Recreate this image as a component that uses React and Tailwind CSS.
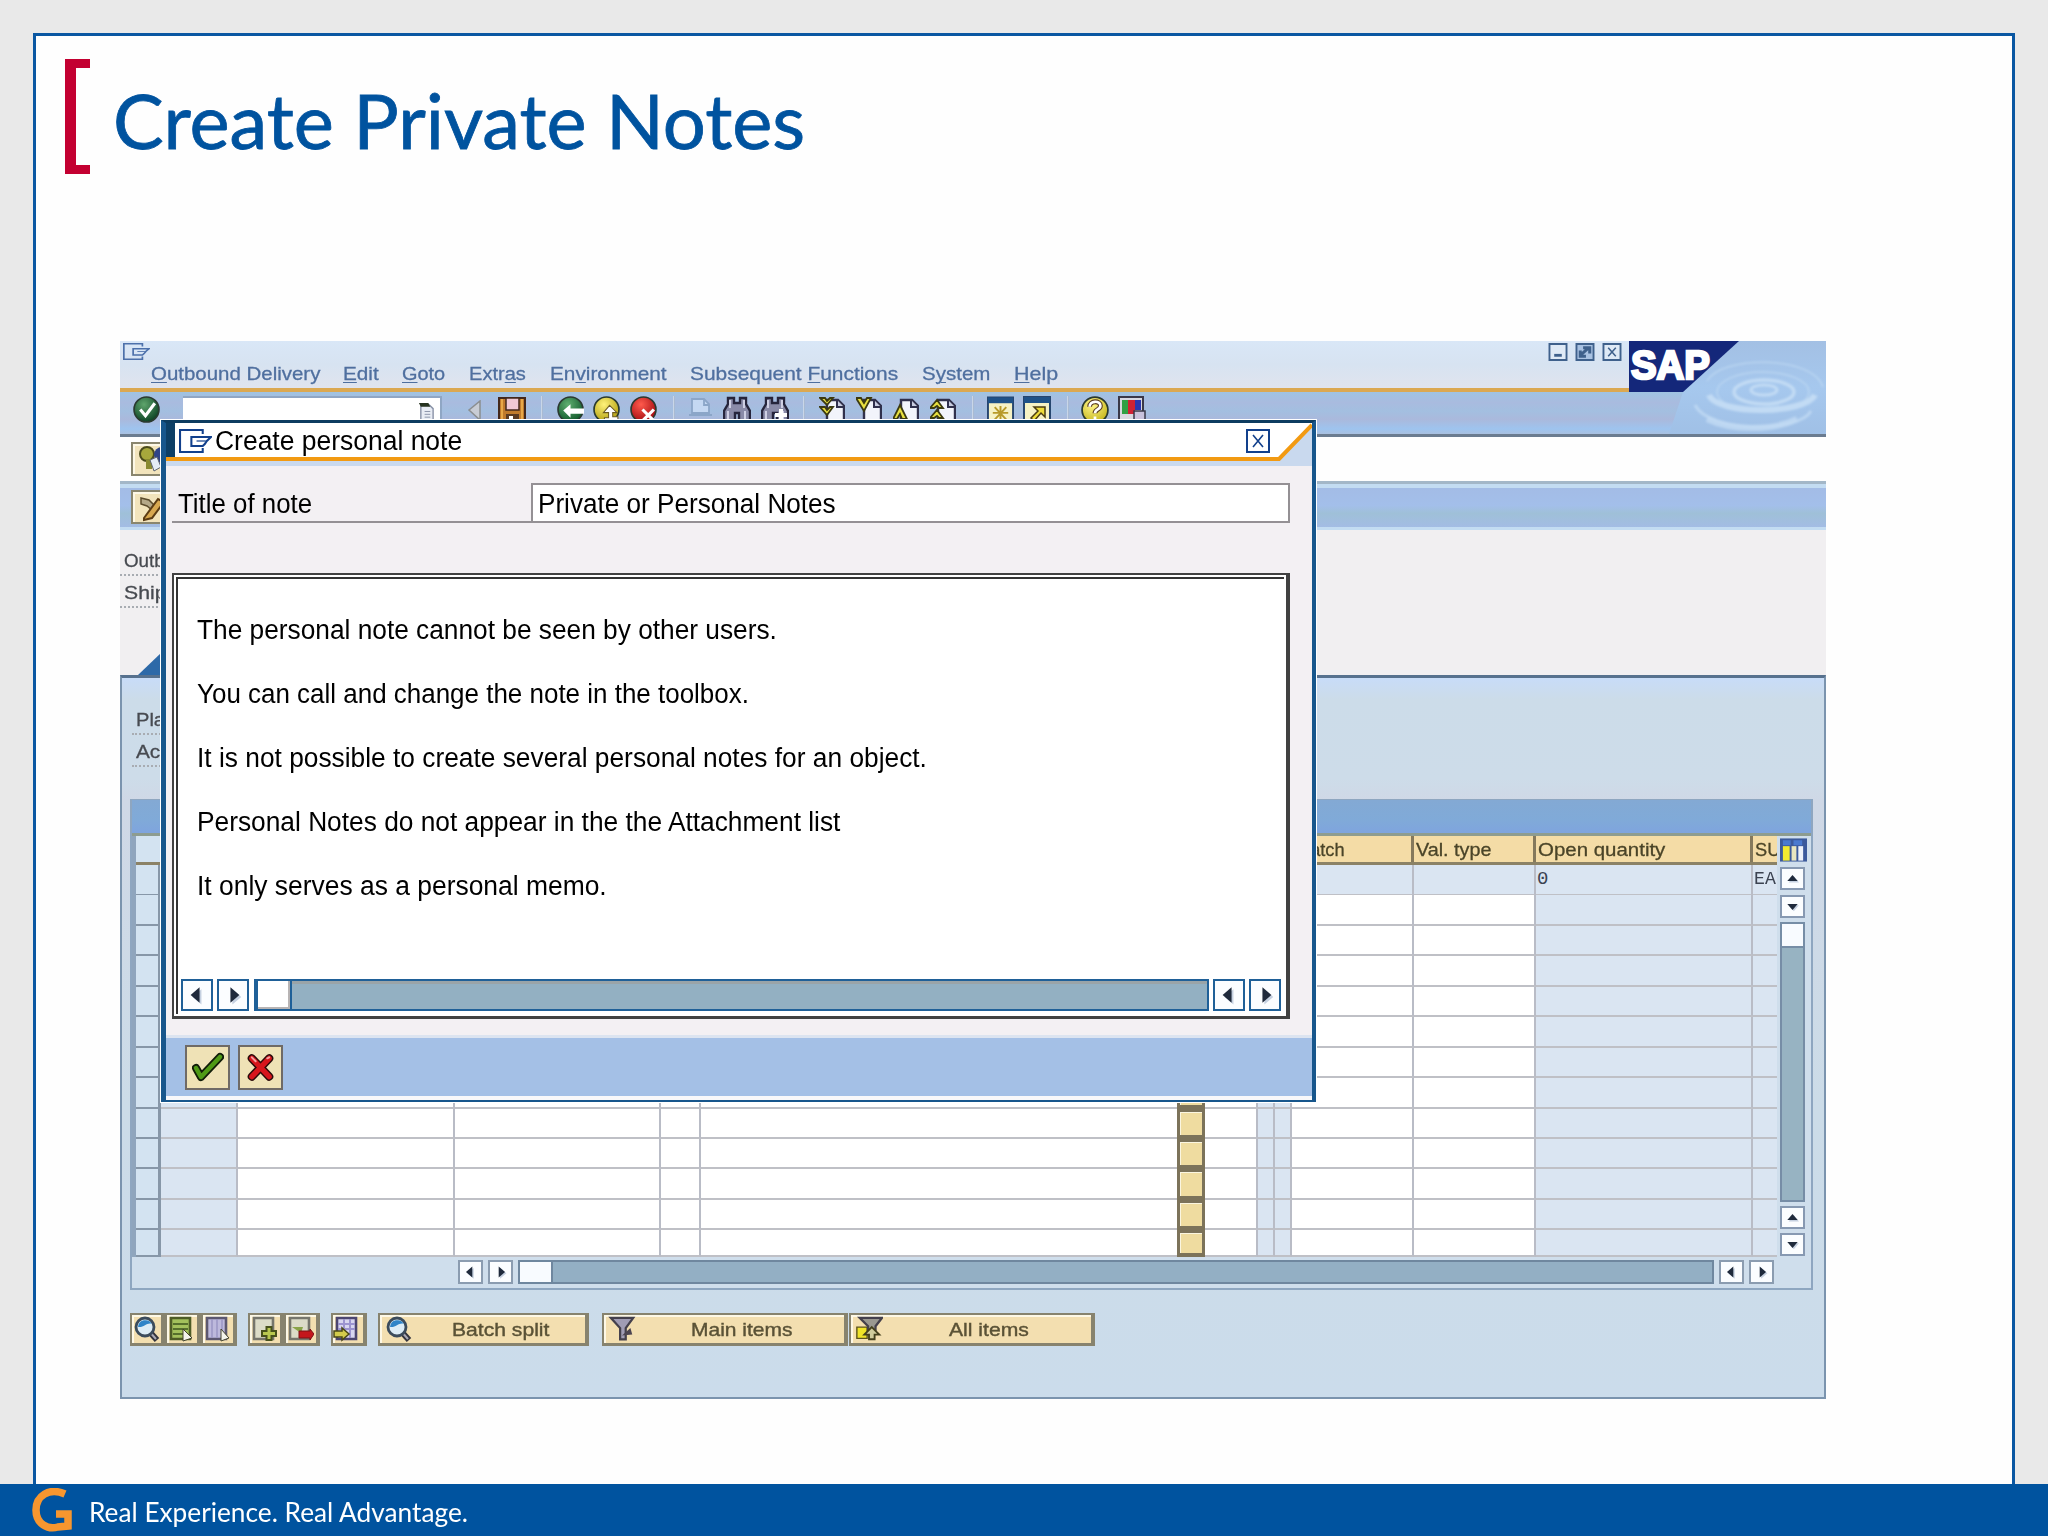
import React, { useLayoutEffect, useRef, useState } from "react";

/* Text on one line, condensed or widened to a set width. */
function Fit({ w, className = "", children }) {
  const ref = useRef(null);
  const [scale, setScale] = useState(1);
  useLayoutEffect(() => {
    const n = ref.current.offsetWidth;
    if (n) setScale(w / n);
  }, [w]);
  return (
    <span className={"block " + className} style={{ width: w }}>
      <span
        ref={ref}
        className="inline-block whitespace-pre origin-left"
        style={{ transform: `scaleX(${scale})` }}
      >
        {children}
      </span>
    </span>
  );
}

const U = ({ children }) => (
  <span className="underline decoration-1 underline-offset-2">{children}</span>
);

const DoorIcon = ({ className }) => (
  <svg viewBox="0 0 32 24" className={className} fill="none" stroke="#12408c" strokeWidth="2" preserveAspectRatio="none">
    <path d="M23 5V1H1v22h22v-4" />
    <path d="M12 8h19l-2 2-2 2-2 3-2 2H12z" />
    <path d="M17 12h9" strokeWidth="1.2" />
  </svg>
);

function Arrow({ dir, className = "" }) {
  const d = {
    left: "M13 5v12L6 11z",
    right: "M9 5v12l7-6z",
    up: "M11 7l6 7H5z",
    down: "M11 15l6-7H5z",
  }[dir];
  return (
    <span className={"block shrink-0 bg-[#fbfdff] border-2 " + className}>
      <svg viewBox="0 0 22 22" className="block w-full h-full">
        <path d={d} transform="translate(1.5 1.5)" fill="#c5d0e0" />
        <path d={d} fill="#1f2a3c" />
      </svg>
    </span>
  );
}

/* ---------- toolbar icons ---------- */
const Ball = ({ id, c1, c2, children, className }) => (
  <svg viewBox="0 0 26 26" className={className}>
    <defs>
      <radialGradient id={id} cx="0.4" cy="0.3" r="0.7">
        <stop offset="0" stopColor={c1} />
        <stop offset="1" stopColor={c2} />
      </radialGradient>
    </defs>
    <circle cx="13" cy="13" r="12" fill={`url(#${id})`} stroke="#2a3a30" strokeWidth="1.6" />
    {children}
  </svg>
);

const Sep = ({ className }) => <span className={"w-[2px] h-[26px] bg-[#c9d6e8] border-r border-[#a9bad2] " + className} />;

const Save = () => (
  <svg viewBox="0 0 28 26" className="w-[28px] h-[26px] ml-[16px]">
    <path d="M1 2h26v24H1z" fill="#c07a2c" stroke="#43281c" strokeWidth="2" />
    <path d="M8 2h13v12H8z" fill="#f0c8d4" stroke="#43281c" strokeWidth="1.5" />
    <path d="M4 3v22M24 3v22" stroke="#e8a848" strokeWidth="2" />
    <path d="M8 18h13v8H8z" fill="#5b3a22" />
    <path d="M11 20h4v6h-4z" fill="#fff" />
  </svg>
);

const Printer = () => (
  <svg viewBox="0 0 25 26" className="w-[25px] h-[26px] ml-[13px]" fill="none" stroke="#8ba6c8" strokeWidth="1.8">
    <path d="M4 17V3h12l5 5v9z" fill="#c4d8f2" />
    <path d="M16 3v6h5M1 19h23M2 24h21" />
  </svg>
);

const Find = ({ plus, className }) => (
  <svg viewBox="0 0 28 26" className={className}>
    <path d="M5 2h6v5h6V2h6v6l4 7v11H16v-9h-4v9H1V15l4-7z" fill="#8a8ba8" stroke="#26253c" strokeWidth="2.4" />
    <path d="M7 4v8M21 4v8M5 15v9M22 15v9" stroke="#cfd0e4" strokeWidth="2" />
    {plus && <path d="M20 13v12M14 19h12" stroke="#fff" strokeWidth="4" />}
  </svg>
);

const PageNav = ({ kind, className }) => (
  <svg viewBox="0 0 26 26" className={className}>
    <path d="M8 4h11l6 6v16H8z" fill="#f2f4fb" stroke="#30304c" strokeWidth="2.4" />
    <path d="M18 4v7h7" fill="#c8cce0" stroke="#30304c" strokeWidth="2" />
    {kind === 0 && <path d="M1 2h5l2 3 3-3h3L8 9zM1 11h5l2 3 3-3h3l-6 8z" fill="#e8e040" stroke="#3c3a10" strokeWidth="1.8" />}
    {kind === 1 && <path d="M0 2h5l3 5 3-5h4L8 15z" fill="#e8e040" stroke="#3c3a10" strokeWidth="1.8" />}
    {kind === 2 && <path d="M7 9l7 14H9l-2-5-3 5H0z" fill="#e8e040" stroke="#3c3a10" strokeWidth="1.8" />}
    {kind === 3 && <path d="M7 4l6 8H9l-2-2-3 2H0zM7 14l6 8H9l-2-2-3 2H0z" fill="#e8e040" stroke="#3c3a10" strokeWidth="1.8" />}
  </svg>
);

const Win = ({ arrow, className }) => (
  <svg viewBox="0 0 28 26" className={className}>
    <path d="M1 1h26v26H1z" fill="#f6f2c4" stroke="#27466f" strokeWidth="2" />
    <path d="M1 1h26v6H1z" fill="#1f5288" />
    {arrow ? (
      <path d="M11 11h11v10l-4-4-7 8-3-3 7-7z" fill="#eedc3a" stroke="#4a3c10" strokeWidth="1.5" />
    ) : (
      <path d="M14 10v15M6 17h16M8 11l12 13M20 11L8 24" stroke="#b89a28" strokeWidth="2" />
    )}
  </svg>
);

function Toolbar() {
  return (
    <div className="flex h-[42px] items-start pt-[4px] bg-[linear-gradient(#9fc3e2,#a9bbdf_25%,#a3bfe0_45%,#aab9dc_65%,#9ec4ef_88%,#a9c0e0)]">
      <Ball id="gk" c1="#5fa56c" c2="#0e4526" className="w-[27px] h-[27px] ml-[13px]">
        <path d="M7 13l5 6 9-12" fill="none" stroke="#fff" strokeWidth="3" />
      </Ball>
      <div className="ml-[23px] w-[259px] h-[30px] bg-white border-t-2 border-r-2 border-[#8fa6c4] flex justify-end pr-[5px] pt-[3px]">
        <svg viewBox="0 0 18 22" className="w-[17px] h-[21px]">
          <path d="M3 4h9l4 4v13H3z" fill="#e8ecf4" stroke="#8a93a8" strokeWidth="1.5" />
          <path d="M1 2h10l2 4H3z" fill="#26331f" />
          <path d="M7 11h6M7 14h6M7 17h6" stroke="#8a93a8" />
        </svg>
      </div>
      <svg viewBox="0 0 15 22" className="w-[15px] h-[22px] ml-[25px] mt-[4px]">
        <path d="M13 1v19L2 10z" fill="#c8ccd4" stroke="#8b8e90" strokeWidth="1.5" />
      </svg>
      <Save />
      <Sep className="ml-[15px]" />
      <Ball id="gb" c1="#5fae70" c2="#125a2c" className="w-[27px] h-[27px] ml-[14px]">
        <path d="M6 14l7-6v4h13v5H13v4z" fill="#fff" />
      </Ball>
      <Ball id="ye" c1="#fff27a" c2="#b4a210" className="w-[27px] h-[27px] ml-[9px]">
        <path d="M16 9l7 7h-4v4h5v6H11v-5h4v-5h-5z" fill="#fff" stroke="#6b5a20" />
      </Ball>
      <Ball id="rd" c1="#ff5a4c" c2="#a60d12" className="w-[27px] h-[27px] ml-[10px]">
        <path d="M12 13l11 11M23 13L12 24" stroke="#fff" strokeWidth="3" />
      </Ball>
      <Sep className="ml-[16px]" />
      <Printer />
      <Find className="w-[28px] h-[26px] ml-[10px]" />
      <Find plus className="w-[28px] h-[26px] ml-[10px]" />
      <Sep className="ml-[14px]" />
      <PageNav kind={0} className="w-[26px] h-[26px] ml-[14px]" />
      <PageNav kind={1} className="w-[26px] h-[26px] ml-[11px]" />
      <PageNav kind={2} className="w-[26px] h-[26px] ml-[11px]" />
      <PageNav kind={3} className="w-[26px] h-[26px] ml-[11px]" />
      <Sep className="ml-[16px]" />
      <Win className="w-[27px] h-[26px] ml-[13px]" />
      <Win arrow className="w-[28px] h-[26px] ml-[9px]" />
      <Sep className="ml-[16px]" />
      <Ball id="hp" c1="#fff68a" c2="#c8b820" className="w-[28px] h-[28px] ml-[12px]">
        <path d="M8 10c0-6 10-6 10-1 0 4-5 3-5 7" fill="none" stroke="#5a3c20" strokeWidth="4.5" />
        <path d="M8 10c0-6 10-6 10-1 0 4-5 3-5 7M13 19v3" fill="none" stroke="#fff" strokeWidth="2.5" />
      </Ball>
      <svg viewBox="0 0 28 26" className="w-[28px] h-[26px] ml-[9px]">
        <path d="M1 1h24v23H1z" fill="#d8d8e0" stroke="#3a3848" strokeWidth="2" />
        <path d="M4 4h8v14H4z" fill="#2fa044" />
        <path d="M10 4h7v14h-7z" fill="#cf2234" />
        <path d="M17 4h6v10h-6z" fill="#2a36b0" />
        <path d="M16 15h11v11H16z" fill="#c9c2dc" stroke="#3a3848" strokeWidth="1.5" />
      </svg>
    </div>
  );
}

const menuText = "text-[19px] leading-[26px] text-[#4f6f9f] [-webkit-text-stroke:0.3px_#4f6f9f]";

function MenuBar() {
  return (
    <div className="h-[51px] flex flex-col bg-[linear-gradient(#d9e7f7,#d7e3f1_50%,#e0e4ee)] border-b-[4px] border-[#dba851]">
      <div className="flex h-[20px] pt-[2px]">
        <DoorIcon className="w-[27px] h-[17px] ml-[3px] opacity-70" />
        <div className="flex ml-auto mr-[7px] gap-[7px]">
          {["M6 13h8", "M5 13l9-8M8 5h7v6M5 8v6h6", "M6 5l8 9M14 5l-8 9"].map((d, i) => (
            <svg key={i} viewBox="0 0 20 19" className="w-[20px] h-[18px]" fill="none" stroke="#3f618c">
              <path d="M1 1h18v17H1z" fill={i === 1 ? "#a9c2e2" : "#dfeaf6"} strokeWidth="2" />
              <path d={d} strokeWidth={i === 0 ? 3 : i === 1 ? 3.2 : 1.6} />
            </svg>
          ))}
        </div>
      </div>
      <div className={"flex " + menuText}>
        <Fit w={169} className="ml-[31px]"><U>O</U>utbound Delivery</Fit>
        <Fit w={36} className="ml-[23px]"><U>E</U>dit</Fit>
        <Fit w={43} className="ml-[23px]"><U>G</U>oto</Fit>
        <Fit w={57} className="ml-[24px]">Extr<U>a</U>s</Fit>
        <Fit w={117} className="ml-[24px]">En<U>v</U>ironment</Fit>
        <Fit w={208} className="ml-[23px]">Subsequent <U>F</U>unctions</Fit>
        <Fit w={68} className="ml-[24px]">S<U>y</U>stem</Fit>
        <Fit w={44} className="ml-[24px]"><U>H</U>elp</Fit>
      </div>
    </div>
  );
}

const SapLogo = () => (
  <svg viewBox="0 0 197 93" className="absolute right-0 top-0 w-[197px] h-[93px]">
    <defs>
      <linearGradient id="water" x1="0" y1="0" x2="0" y2="1">
        <stop offset="0" stopColor="#a3c0e4" />
        <stop offset="0.5" stopColor="#a6c8ee" />
        <stop offset="1" stopColor="#a0c0e6" />
      </linearGradient>
      <filter id="soft"><feGaussianBlur stdDeviation="1" /></filter>
    </defs>
    <path d="M110 0h87v93H40L54 51z" fill="url(#water)" />
    <g fill="none" stroke="#c2dbf4" filter="url(#soft)">
      <ellipse cx="135" cy="49" rx="13" ry="5" strokeWidth="3" />
      <ellipse cx="135" cy="51" rx="30" ry="12" strokeWidth="3.500" />
      <ellipse cx="134" cy="51" rx="46" ry="20" strokeWidth="1.500" opacity="0.7" />
      <path d="M80 54c8 20 96 20 106 0" strokeWidth="6" />
      <path d="M66 64c14 28 104 28 116 6" strokeWidth="3" opacity="0.8" />
      <path d="M78 78c24 12 66 12 90 0" strokeWidth="6" opacity="0.8" />
      <path d="M78 40c14-26 106-26 116 6" strokeWidth="1.500" opacity="0.7" />
    </g>
    <path d="M0 0h110L54 51H0z" fill="#14277a" />
    <text x="2" y="38" fontFamily="Liberation Sans, Arial, sans-serif" fontWeight="700" fontSize="41" textLength="79" lengthAdjust="spacingAndGlyphs" fill="#fff" stroke="#fff" strokeWidth="2.6">SAP</text>
  </svg>
);

/* ---------- items table ---------- */
const COLS =
  "grid grid-cols-[25px_77px_217px_206px_40px_476px_28px_53px_17px_17px_122px_122px_217px_24px]";
const headText = "text-[19px] leading-[28px] text-[#4a4428] [-webkit-text-stroke:0.3px_#4a4428] overflow-hidden ";
const head = headText + "h-full border-r-[3px] border-[#85795c] pl-[2px]";

function ItemRow({ first, last }) {
  const b = "border-b-2 border-[#bfc0c6] ";
  const blue = "bg-[#dae5f2] ";
  const w = first ? blue : "bg-white ";
  const r = "border-r-2 border-r-[#b9bcc6] ";
  const h = last ? "h-[27px]" : "h-[30.45px]";
  return (
    <div className={COLS + " " + h}>
      <div className="bg-[#d3e3f1] border-b-2 border-[#8797a8] border-r-[3px]" />
      <div className={b + blue + r} />
      <div className={b + w + r} />
      <div className={b + w + r} />
      <div className={b + w + r} />
      <div className={b + w} />
      <div className="bg-[#efdca0] border-[3px] border-b-[4px] border-[#7c735a] shadow-[inset_1px_1px_0_#fbf6e0]" />
      <div className={b + w + r} />
      <div className={b + blue + r} />
      <div className={b + blue + r} />
      <div className={b + w + r} />
      <div className={b + w + r} />
      <div className={b + blue + r + "text-[19px] leading-[29px] text-[#3b4250] pl-[1px] font-['Liberation_Mono']"}>{first ? "0" : ""}</div>
      <div className={b + blue + "text-[19px] leading-[29px] text-[#3b4250] font-['Liberation_Mono'] overflow-hidden pl-px"}>{first ? <Fit w={22}>EA</Fit> : ""}</div>
    </div>
  );
}

function ItemTable() {
  return (
    <div className="w-[1683px] h-[491px] ml-[8px] border-2 border-t border-[#8ea6c0] bg-[#cfdeec] flex flex-col">
      <div className="h-[36px] bg-[linear-gradient(#83a9d4,#80aad8_60%,#7fa4de)] border-b-[3px] border-[#8d9c90]" />
      <div className="flex h-[421px]">
        <div className="w-[1645px] pl-[4px] bg-[#8fa5bd]">
          <div className={COLS + " h-[29px] bg-[#f4dca6] border-b-[3px] border-[#8b8266]"}>
            <div className="bg-[#d3e3f1]" />
            <div className={head} /><div className={head} /><div className={head} /><div className={head} />
            <div className={head} /><div className={head} /><div className={head} /><div className={head} /><div className={head} />
            <div className={head + " pl-[6px]"}><Fit w={47}>Batch</Fit></div>
            <div className={head}><Fit w={76}>Val. type</Fit></div>
            <div className={head}><Fit w={127}>Open quantity</Fit></div>
            <div className={headText + "pl-[2px]"}><Fit w={25}>SU</Fit></div>
          </div>
          {Array.from({ length: 13 }, (_, i) => (
            <ItemRow key={i} first={i === 0} last={i === 12} />
          ))}
        </div>
        <div className="flex-1 flex flex-col pl-[3px] pt-[2px] bg-[#cfdeec]">
          <svg viewBox="0 0 28 24" className="w-[27px] h-[24px]">
            <path d="M0 0h28v24H0z" fill="#3c5a9c" />
            <path d="M3 2h8v5H3zM14 2h9v5h-9z" fill="#4a7ad0" />
            <path d="M3 8h7v15H3z" fill="#f2ea30" />
            <path d="M12 8h5v15h-5z" fill="#e8e6c0" />
            <path d="M19 8h5v15h-5z" fill="#eef2fa" />
          </svg>
          <Arrow dir="up" className="w-[25px] h-[23px] mt-[5px] border-[#8799b2]" />
          <Arrow dir="down" className="w-[25px] h-[23px] mt-[5px] border-[#8799b2]" />
          <div className="w-[25px] h-[280px] mt-[4px] bg-[#97b3c2] border-2 border-[#768da6] flex flex-col">
            <div className="h-[24px] bg-[#f8fbff] border-b-2 border-[#768da6]" />
          </div>
          <Arrow dir="up" className="w-[25px] h-[23px] mt-[4px] border-[#8799b2]" />
          <Arrow dir="down" className="w-[25px] h-[23px] mt-[4px] border-[#8799b2]" />
        </div>
      </div>
      <div className="flex pt-[3px] pl-[326px]">
        <Arrow dir="left" className="w-[25px] h-[24px] border-[#8b9cb0]" />
        <Arrow dir="right" className="w-[25px] h-[24px] ml-[5px] border-[#8b9cb0]" />
        <div className="w-[1196px] h-[24px] ml-[5px] bg-[#93afc4] border-2 border-[#6f879f] flex">
          <div className="w-[33px] bg-[#f8fbff] border-r-2 border-[#6f879f]" />
        </div>
        <Arrow dir="left" className="w-[25px] h-[24px] ml-[5px] border-[#8b9cb0]" />
        <Arrow dir="right" className="w-[25px] h-[24px] ml-[5px] border-[#8b9cb0]" />
      </div>
    </div>
  );
}

/* ---------- lower buttons ---------- */
const btn = "h-[33px] flex items-center bg-[#f3dfb0] border-2 border-r-[4px] border-b-[3px] border-[#87836e] shadow-[inset_2px_2px_0_#fdf8e6] ";
const ico = "w-[28px] h-[28px] ";

const Lens = ({ className = "" }) => (
  <svg viewBox="0 0 28 28" className={ico + className}>
    <path d="M15 14l10 11" stroke="#34343c" strokeWidth="6" />
    <path d="M16 15l8 9" stroke="#a8a8b4" strokeWidth="2" />
    <circle cx="13" cy="12" r="9" fill="#dcecf6" stroke="#3c4c5c" strokeWidth="2.8" />
    <path d="M6 12a7.500 7.500 0 0 1 14-3c-5-2-8 4-14 3z" fill="#2f84c8" />
  </svg>
);
const Sheet = ({ fill, line, children }) => (
  <svg viewBox="0 0 28 28" className={ico}>
    <path d="M4 3h19v21H4z" fill={fill} stroke={line} strokeWidth="2.6" />
    {children}
  </svg>
);
const Funnel = ({ all }) => (
  <svg viewBox="0 0 30 28" className={ico + "ml-[4px]"}>
    {all && <path d="M2 12h11v12H2z" fill="#f0e428" stroke="#5c541c" strokeWidth="1.5" />}
    <path d={all ? "M5 2h24l-7 9v4h-8v-4z" : "M3 2h24l-8 11v12h-6V13z"} fill={all ? "#9a9890" : "#a09cb4"} stroke="#44404c" strokeWidth="2.4" />
    {all ? <path d="M18 12l8 8h-5v5h-6v-5h-5z" fill="#d0cc9c" stroke="#44401c" strokeWidth="2" /> : <path d="M15 21l9-8 2 7z" fill="#4c4450" />}
  </svg>
);

function LowerButtons() {
  const t = "text-[18.5px] leading-[26px] pt-px text-[#5a5236] [-webkit-text-stroke:0.4px_#5a5236]";
  return (
    <div className="flex mt-[23px] pl-[8px]">
      <div className={btn + "w-[35px]"}><Lens /></div>
      <div className={btn + "w-[36px]"}>
        <Sheet fill="#a3c15c" line="#4e5c26"><path d="M6 9h15M6 14h15M6 19h15" stroke="#56702c" strokeWidth="2" /><path d="M16 14l9 9-9 3z" fill="#f4f4ec" stroke="#44442c" /></Sheet>
      </div>
      <div className={btn + "w-[36px]"}>
        <Sheet fill="#bdb9dc" line="#5c5870"><path d="M9 4v19M14 4v19M19 4v19" stroke="#9a96c4" strokeWidth="1.5" /><path d="M18 14l8 9-8 3z" fill="#f4f4ec" stroke="#44442c" /></Sheet>
      </div>
      <div className={btn + "w-[36px] ml-[11px]"}>
        <Sheet fill="#dcdcc8" line="#76766c"><path d="M19 11v15M11 18.500h16" stroke="#47511c" strokeWidth="7" /><path d="M19 13v11M13 18.500h12" stroke="#b8c850" strokeWidth="3" /></Sheet>
      </div>
      <div className={btn + "w-[36px]"}>
        <Sheet fill="#dcdcc8" line="#76766c"><path d="M6 12h11l-2 6z" fill="#8aa448" /><path d="M13 16h11v-2l4 5-4 6v-2H13z" fill="#c4171c" stroke="#7c1014" /></Sheet>
      </div>
      <div className={btn + "w-[36px] ml-[11px]"}>
        <Sheet fill="#d8d6f0" line="#4c4670"><path d="M11 4v19M17 4v19M5 9h17M5 14h17" stroke="#9c94d0" strokeWidth="2" /><path d="M1 16h8v-3l7 6-7 6v-3H1z" fill="#d4cc4c" stroke="#4a4818" strokeWidth="1.5" /></Sheet>
      </div>
      <div className={btn + "w-[211px] ml-[11px]"}><Lens className="ml-[4px]" /><Fit w={97} className={t + " ml-[40px]"}>Batch split</Fit></div>
      <div className={btn + "w-[246px] ml-[13px]"}><Funnel /><Fit w={101} className={t + " ml-[55px]"}>Main items</Fit></div>
      <div className={btn + "w-[246px] ml-px"}><Funnel all /><Fit w={80} className={t + " ml-[66px]"}>All items</Fit></div>
    </div>
  );
}

/* ---------- dialog ---------- */
const NOTES = [
  ["The personal note cannot be seen by other users.", 580],
  ["You can call and change the note in the toolbox.", 552],
  ["It is not possible to create several personal notes for an object.", 730],
  ["Personal Notes do not appear in the the Attachment list", 643],
  ["It only serves as a personal memo.", 410],
];

function Dialog() {
  const sb = "w-[32px] h-[32px] border-[#1f6098]";
  const ob = "w-[45px] h-[45px] bg-[#efe2b6] border-2 border-[#6f6a66] flex items-center justify-center";
  return (
    <div className="absolute left-[41px] top-[79px] w-[1155px] h-[682px] border-l-[5px] border-r-[4px] border-t-[3px] border-b-[2px] border-[#17568c] border-t-[#0d3c60] bg-[#f3f0f3] shadow-[0_0_0_1px_#ffffff] flex flex-col text-[27px] text-black">
      <div className="h-[43px] bg-[#c9d9ee] relative">
        <svg viewBox="0 0 1147 43" className="absolute inset-0 w-full h-full" preserveAspectRatio="none">
          <path d="M0 0h1147v2l-34 34H0z" fill="#fff" />
          <path d="M0 0h9v34H0z" fill="#0d3f66" />
          <path d="M0 36h1114L1147 2" fill="none" stroke="#f29a12" strokeWidth="4" />
        </svg>
        <div className="relative flex items-center h-[36px] pl-[13px]">
          <DoorIcon className="w-[33px] h-[24px]" />
          <Fit w={247} className="ml-[3px] leading-[36px]">Create personal note</Fit>
          <svg viewBox="0 0 24 24" className="w-[24px] h-[24px] ml-auto mr-[42px]" fill="none" stroke="#12408c">
            <path d="M1 1h22v22H1z" strokeWidth="2" fill="#fff" />
            <path d="M7 6l10 12M17 6L7 18" strokeWidth="1.6" />
          </svg>
        </div>
      </div>
      <div className="flex mt-[17px] ml-[6px] h-[40px]">
        <div className="w-[359px] border-b-2 border-[#949094] pl-[6px] leading-[42px]"><Fit w={134}>Title of note</Fit></div>
        <div className="w-[759px] border-2 border-[#949094] bg-white pl-[5px] leading-[38px]"><Fit w={298}>Private or Personal Notes</Fit></div>
      </div>
      <div className="mt-[50px] ml-[6px] w-[1118px] h-[446px] border-[#414141] border-l-2 border-t-2 border-r-[4px] border-b-[3px] bg-white p-[2px]">
        <div className="h-full border-l-2 border-t-2 border-[#333] flex flex-col">
          <div className="pt-[19px] pl-[19px]">
            {NOTES.map(([t, w]) => (
              <Fit key={t} w={w} className="leading-[64px]">{t}</Fit>
            ))}
          </div>
          <div className="flex mt-auto mb-[3px] ml-[3px]">
            <Arrow dir="left" className={sb} />
            <Arrow dir="right" className={sb + " ml-[4px]"} />
            <div className="w-[955px] h-[32px] ml-[5px] bg-[#93b0c2] border-2 border-[#1f6098] shadow-[inset_0_3px_0_#9aa4a8] flex">
              <div className="w-[36px] bg-white border-l-2 border-r-2 border-[#1f6098] shadow-[inset_-2px_-2px_0_#b8b4b4]" />
            </div>
            <Arrow dir="left" className={sb + " ml-[4px]"} />
            <Arrow dir="right" className={sb + " ml-[4px]"} />
          </div>
        </div>
      </div>
      <div className="mt-auto h-[65px] border-t-[3px] border-b-[4px] border-t-[#dce4f0] border-b-[#f8f8fa] bg-[#a4c0e6] flex items-center pl-[19px] gap-[8px]">
        <div className={ob}>
          <svg viewBox="0 0 32 30" className="w-[32px] h-[30px]" fill="none" strokeLinejoin="round">
            <path d="M4 16l5 9L28 5" stroke="#111c08" strokeWidth="8" strokeLinecap="round" />
            <path d="M4 16l5 9L28 5" stroke="#4f9a16" strokeWidth="4.5" strokeLinecap="round" />
          </svg>
        </div>
        <div className={ob}>
          <svg viewBox="0 0 28 28" className="w-[27px] h-[28px]" strokeLinecap="round">
            <path d="M5 5l18 19M23 5L5 24" stroke="#2b0a0a" strokeWidth="8.500" />
            <path d="M5 5l18 19M23 5L5 24" stroke="#d8151c" strokeWidth="5.500" />
            <path d="M5 4l4 4M21 5l2-1" stroke="#f4a0a0" strokeWidth="2" />
          </svg>
        </div>
      </div>
    </div>
  );
}

/* ---------- delivery window ---------- */
const sideBtn = "w-[40px] h-[34px] ml-[11px] bg-[#f2e4bc] border-2 border-[#8a866e] shadow-[inset_2px_2px_0_#fdf8e6] pl-[5px] pt-[2px] ";
const dots = "border-b-2 border-dotted border-[#a8acb2] ";
const sideText = "text-[19px] leading-[26px] text-[#474a50] [-webkit-text-stroke:0.3px_#474a50] ";

function SapWindow() {
  return (
    <div className="relative w-[1706px] h-[1058px] flex flex-col bg-[#ccdce9] font-['Liberation_Sans',Arial,sans-serif]">
      <div className="relative flex flex-col">
        <div className="pr-[197px] bg-[#a3c0e4]"><MenuBar /></div>
        <Toolbar />
        <SapLogo />
      </div>
      <div className="h-[50px] bg-[#fefefe] border-t-[3px] border-b-[3px] border-t-[#6b7c90] border-b-[#a3b7c8] pt-[5px]">
        <div className={sideBtn}>
          <svg viewBox="0 0 34 28" className="w-[34px] h-[28px]">
            <circle cx="9" cy="8" r="7" fill="#a8a83c" stroke="#4c4c1c" strokeWidth="2" />
            <path d="M8 13h6v10H8z" fill="#8a8a30" />
            <circle cx="24" cy="9" r="8" fill="#2f4488" />
            <path d="M12 14l7-3 4 10-7 4z" fill="#e4ecf6" stroke="#5c6470" />
          </svg>
        </div>
      </div>
      <div className="h-[46px] border-t-[4px] border-b-[3px] border-[#c3dcf2] bg-[linear-gradient(#a3bce6,#a3bfea_45%,#9fc0d8_65%,#a3bce4)] pt-[2px]">
        <div className={sideBtn}>
          <svg viewBox="0 0 34 28" className="w-[34px] h-[28px]">
            <path d="M3 4l8 2 6 6-3 4-5-4-6-2z" fill="#b4a888" stroke="#5c4c2c" strokeWidth="1.500" />
            <path d="M6 24L20 5l6 3-12 16-8 2z" fill="#d8a850" stroke="#5c3c14" strokeWidth="2" />
          </svg>
        </div>
      </div>
      <div className="h-[145px] bg-[#f1eff1] flex flex-col">
        <div className={"w-[50px] mt-[18px] h-[28px] pl-[4px] overflow-hidden " + dots + sideText}><Fit w={82}>Outbound</Fit></div>
        <div className={"w-[50px] mt-[4px] h-[28px] pl-[4px] overflow-hidden " + dots + sideText}><Fit w={67}>Ship-to</Fit></div>
        <svg viewBox="0 0 42 24" className="w-[42px] h-[24px] mt-auto"><path d="M18 24L42 1v23z" fill="#2d69a8" /></svg>
      </div>
      <div className="flex-1 flex flex-col border-2 border-t-[3px] border-[#7b94ae] border-t-[#57718e] bg-[linear-gradient(#c8dcf8,#ccdce9_3%,#cddce9_14%,#cfd8e6_17%,#ccdce8_60%,#cbdceb)]">
        <div className="h-[121px] flex flex-col pt-[29px]">
          <div className={"w-[40px] ml-[10px] h-[28px] pl-[4px] overflow-hidden " + dots + sideText}><Fit w={74}>Planned</Fit></div>
          <div className={"w-[40px] ml-[10px] mt-[4px] h-[28px] pl-[4px] overflow-hidden " + dots + sideText}><Fit w={58}>Actual</Fit></div>
        </div>
        <ItemTable />
        <LowerButtons />
      </div>
      <Dialog />
    </div>
  );
}

export default function App() {
  return (
    <div className="w-[2048px] h-[1536px] overflow-hidden bg-[#e9e9e9] flex flex-col">
      <main className="h-[1451px] mt-[33px] ml-[33px] mr-[33px] border-[3px] border-b-0 border-[#0a57a2] bg-[#fefefe] flex flex-col">
        <header className="flex h-[305px] pt-[23px] pl-[29px] font-['Lato',sans-serif] text-[#00539f]">
          <div className="w-[25px] h-[115px] border-[#c30031] border-l-[11px] border-y-[9px] border-r-0" />
          <Fit w={692} className="ml-[23px] text-[76px] leading-[121px] [-webkit-text-stroke:0.8px_#00539f]">Create Private Notes</Fit>
        </header>
        <div className="pl-[84px]"><SapWindow /></div>
      </main>
      <footer className="h-[52px] bg-[#00539f] flex items-center">
        <svg viewBox="0 0 42 44" className="w-[42px] h-[44px] ml-[32px]">
          <path d="M33 6C17-1 4 8 4 22s12 20 22 17l10-1V26H24" fill="none" stroke="#f7962f" strokeWidth="7.500" />
        </svg>
        <Fit w={379} className="ml-[15px] pt-[4px] font-['Lato',sans-serif] text-[27px] leading-[56px] text-white">Real Experience. Real Advantage.</Fit>
      </footer>
    </div>
  );
}
